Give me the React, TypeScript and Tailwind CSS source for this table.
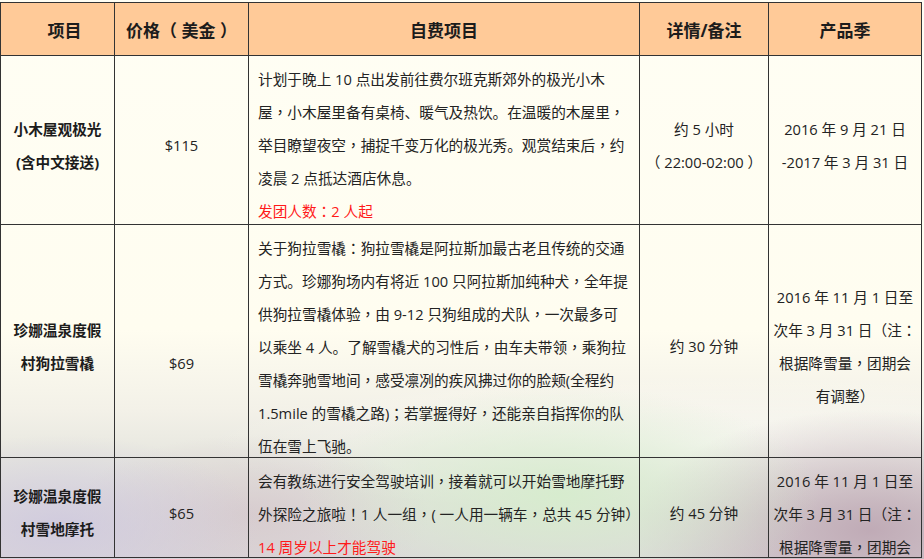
import type { ReactNode } from 'react';

type Row = {
  name: string[];
  price: string[];
  desc: string[];
  note?: string;
  time: string[];
  season: string[];
};

const rows: Row[] = [
  {
    name: ['小木屋观极光', '(含中文接送)'],
    price: ['$115'],
    desc: [
      '计划于晚上 10 点出发前往费尔班克斯郊外的极光小木',
      '屋，小木屋里备有桌椅、暖气及热饮。在温暖的木屋里，',
      '举目瞭望夜空，捕捉千变万化的极光秀。观赏结束后，约',
      '凌晨 2 点抵达酒店休息。',
    ],
    note: '发团人数：2 人起',
    time: ['约 5 小时', '（ 22:00-02:00 ）'],
    season: ['2016 年 9 月 21 日', '-2017 年 3 月 31 日'],
  },
  {
    name: ['珍娜温泉度假', '村狗拉雪橇'],
    price: ['\u00a0', '$69'],
    desc: [
      '关于狗拉雪橇：狗拉雪橇是阿拉斯加最古老且传统的交通',
      '方式。珍娜狗场内有将近 100 只阿拉斯加纯种犬，全年提',
      '供狗拉雪橇体验，由 9-12 只狗组成的犬队，一次最多可',
      '以乘坐 4 人。了解雪橇犬的习性后，由车夫带领，乘狗拉',
      '雪橇奔驰雪地间，感受凛冽的疾风拂过你的脸颊(全程约',
      '1.5mile 的雪橇之路)；若掌握得好，还能亲自指挥你的队',
      '伍在雪上飞驰。',
    ],
    time: ['约 30 分钟'],
    season: ['2016 年 11 月 1 日至', '次年 3 月 31 日（注：', '根据降雪量，团期会', '有调整）'],
  },
  {
    name: ['珍娜温泉度假', '村雪地摩托'],
    price: ['$65'],
    desc: [
      '会有教练进行安全驾驶培训，接着就可以开始雪地摩托野',
      '外探险之旅啦！1 人一组，( 一人用一辆车，总共 45 分钟）',
    ],
    note: '14 周岁以上才能驾驶',
    time: ['约 45 分钟'],
    // last line (有调整）) falls below the visible area
    season: ['2016 年 11 月 1 日至', '次年 3 月 31 日（注：', '根据降雪量，团期会'],
  },
];

// centred comma / colon like the source font
function Punct({ text }: { text: string }) {
  const parts = text.split(/([，：；！])/);
  return (
    <>
      {parts.map((p, i) =>
        /^[，：；！]$/.test(p) ? (
          <span key={i} className="font-['Noto_Sans_CJK_TC',sans-serif] leading-[16px]">
            {p}
          </span>
        ) : (
          p
        ),
      )}
    </>
  );
}

function Cell({ children, className = '' }: { children: ReactNode; className?: string }) {
  return <div className={`border-r border-b border-[#333] ${className}`}>{children}</div>;
}

function Lines({ lines }: { lines: string[] }) {
  return (
    <>
      {lines.map((l, i) => (
        <div key={i} className="whitespace-nowrap">
          <Punct text={l} />
        </div>
      ))}
    </>
  );
}

export default function App() {
  return (
    <div className="w-[924px] h-[559px] overflow-hidden pt-[2px] bg-[image:radial-gradient(ellipse_260px_110px_at_560px_495px,rgba(214,236,205,0.95),transparent),radial-gradient(ellipse_200px_90px_at_60px_525px,rgba(206,200,222,0.85),transparent),radial-gradient(ellipse_240px_120px_at_870px_530px,rgba(190,168,180,0.95),transparent),radial-gradient(ellipse_180px_80px_at_250px_515px,rgba(212,198,202,0.75),transparent),radial-gradient(ellipse_520px_70px_at_720px_445px,rgba(255,255,250,0.6),transparent),linear-gradient(to_bottom,#fffef4_0px,#fffdf0_330px,#f3f1e8_410px,#e6e6df_460px,#dcd8da_559px)] font-['Open_Sans','Noto_Sans_CJK_SC',sans-serif] text-[14.67px] leading-[33px] text-[#232323]">
      <div className="grid w-[922px] grid-cols-[114px_134px_391px_129px_153px] grid-rows-[53px_169px_233px_100px] border-l border-t border-[#333]">
        {['项目', '价格（ 美金 ）', '自费项目', '详情/备注', '产品季'].map((h, i) => (
          <Cell
            key={h}
            className={`flex items-center justify-center bg-[#ffca98] pt-[3px] text-[17px] font-bold text-[#1c1c1c] ${i === 0 ? 'pl-[14px]' : ''}`}
          >
            {h}
          </Cell>
        ))}

        {rows.map((r, ri) => (
          <div key={ri} className="contents">
            <Cell className="flex flex-col items-center justify-center pt-[11px] text-center font-bold text-[#1c1c1c]">
              <Lines lines={r.name} />
            </Cell>
            <Cell className="flex flex-col items-center justify-center pt-[11px] text-center">
              <Lines lines={r.price} />
            </Cell>
            <Cell className="pl-[9px] pt-[7px]">
              <Lines lines={r.desc} />
              {r.note && (
                <div className="whitespace-nowrap text-[#ff1a1a]">
                  <Punct text={r.note} />
                </div>
              )}
            </Cell>
            <Cell className="flex flex-col items-center justify-center pt-[11px] text-center">
              <Lines lines={r.time} />
            </Cell>
            <Cell
              className={
                ri === 2
                  ? 'overflow-hidden pt-[7px] text-center'
                  : 'flex flex-col items-center justify-center pt-[11px] text-center'
              }
            >
              <Lines lines={r.season} />
            </Cell>
          </div>
        ))}
      </div>
    </div>
  );
}
